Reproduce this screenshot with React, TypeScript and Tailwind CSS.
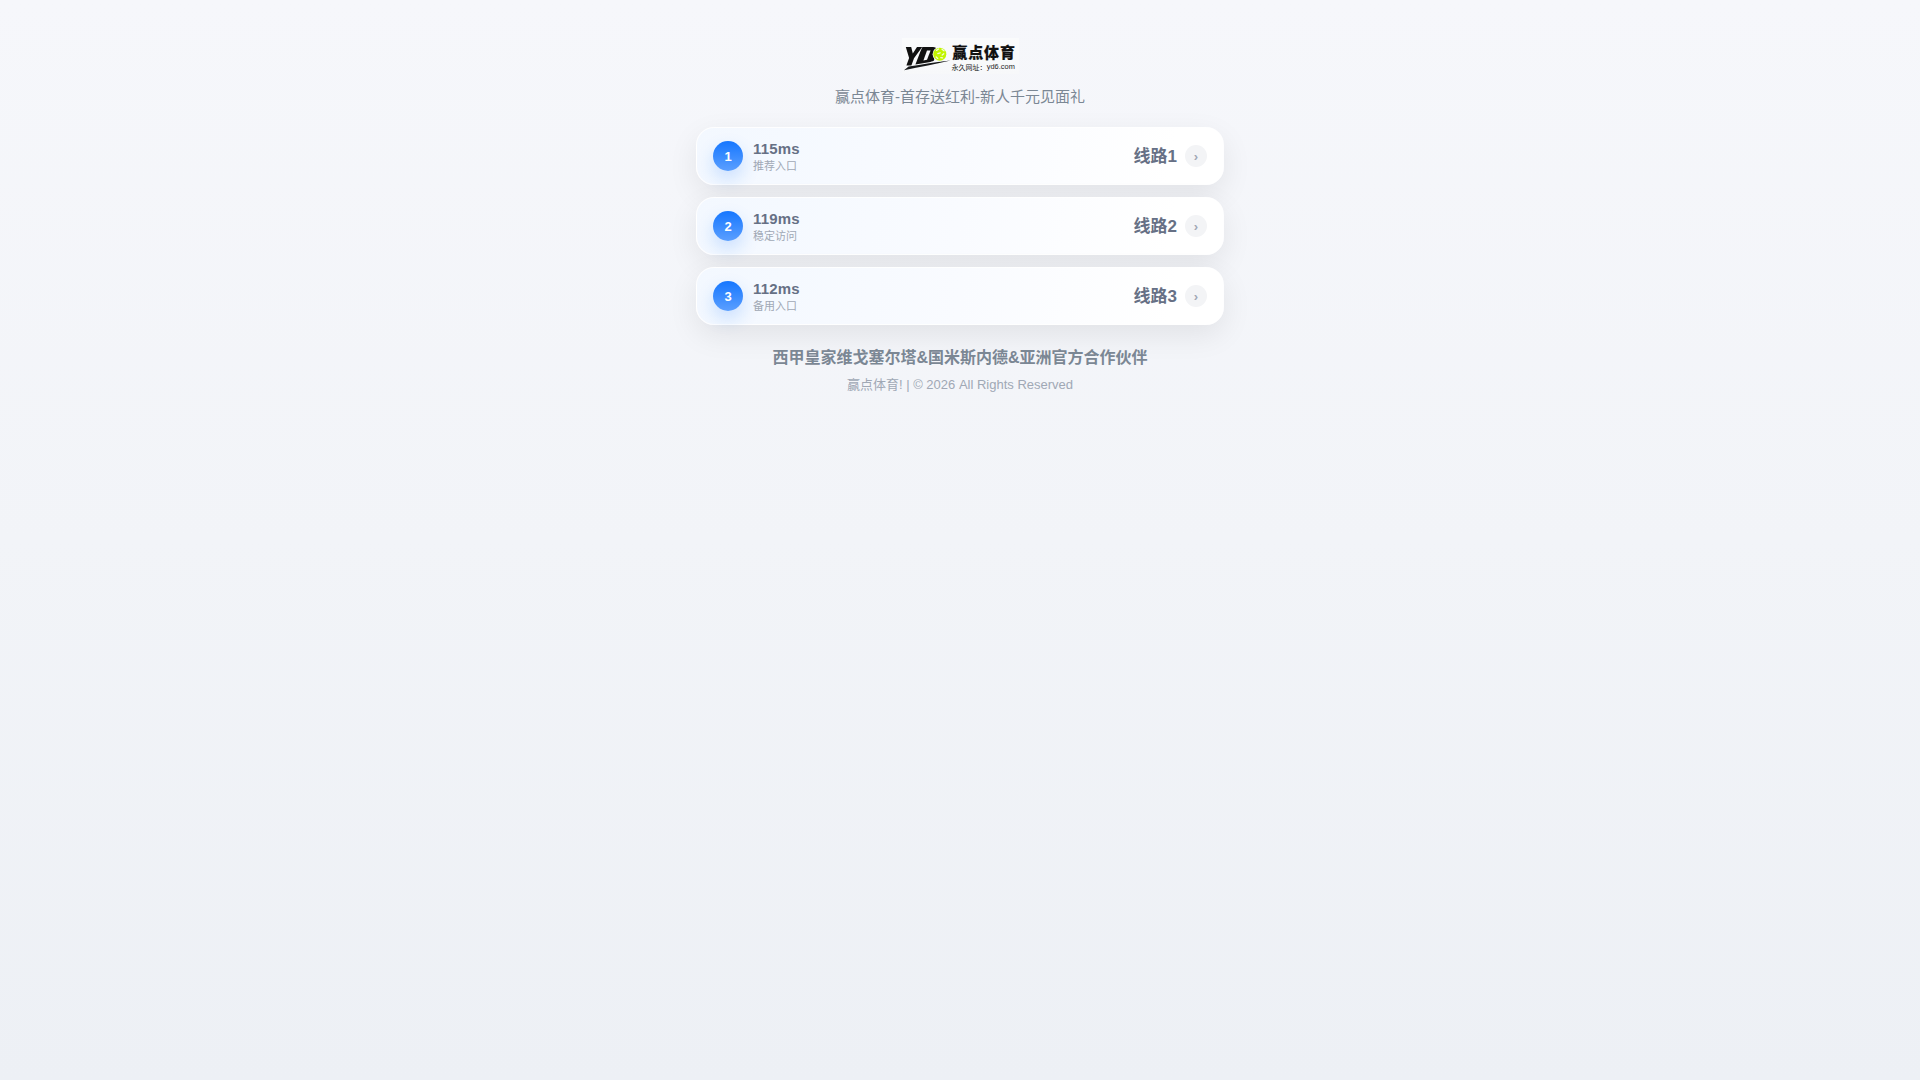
import React, { FC } from "react";

interface LineItem {
  id: number;
  ms: number;
  desc: string;
}

const lines: LineItem[] = [
  { id: 1, ms: 115, desc: "推荐入口" },
  { id: 2, ms: 119, desc: "稳定访问" },
  { id: 3, ms: 112, desc: "备用入口" },
];

const Logo: FC = () => {
  return (
    <svg width="117" height="36" viewBox="0 0 117 36" className="block">
      <defs>
        <linearGradient id="logoBg" x1="0" y1="0" x2="0" y2="1">
          <stop offset="0" stopColor="#fafbfc" />
          <stop offset="1" stopColor="#f7f8fa" />
        </linearGradient>
      </defs>
      <rect width="117" height="36" fill="url(#logoBg)" />
      <path
        d="M3.8 9h5.4l1.6 6.4L15 9h5.2L12 20.2 9.4 27.4H4.4l2.7-7.4z"
        fill="#111"
      />
      <path
        d="M20.4 9H31c2 0 3.2.8 3.4 2.2L32 22.6c-1.6 1-3.2 1.4-5 1.6l-13.6 2.2L18.6 13z"
        fill="#111"
      />
      <path d="M25 12.6h3.6L25 21.8l-3.6.6z" fill="#f8f9fb" />
      <path
        d="M2 32.2 6.6 28.6C20 26.4 34 23.8 48.5 22.4 34 25.6 18 29 2 32.2z"
        fill="#16181a"
      />
      <circle cx="37.8" cy="16.2" r="7.2" fill="#f8f9fb" />
      <circle cx="37.8" cy="16.2" r="6.5" fill="#c2f500" />
      <path
        d="M34.6 12.4l2-1.4M40 11.2l2 1.6M35.8 15.6l2.4-.8M40.2 17l1.6-1.2M34.2 19l1.6 1.4M38.8 19.6l1.8.2"
        stroke="#f2fbdc"
        strokeWidth="1.3"
        strokeLinecap="round"
      />
      <text
        x="50.2"
        y="20.1"
        fontSize="15"
        fontWeight="900"
        textLength="62.8"
        fill="#111"
        stroke="#111"
        strokeWidth="0.2"
      >
        赢点体育
      </text>
      <text
        x="49.6"
        y="31.6"
        fontSize="7"
        fill="#222"
        textLength="35"
        lengthAdjust="spacingAndGlyphs"
      >
        永久网址：
      </text>
      <text x="84.8" y="31.4" fontSize="7.4" fill="#222" textLength="28">
        yd6.com
      </text>
    </svg>
  );
};

const LineCard: FC<{ item: LineItem }> = ({ item }) => {
  return (
    <a
      href="#"
      className="flex h-[58px] items-center justify-between rounded-[18px] border border-white/90 bg-[linear-gradient(100deg,#f3f8ff_0%,#f9fbff_50%,#ffffff_90%)] px-4 shadow-[0_10px_30px_rgba(0,0,0,0.08)]"
    >
      <div className="flex items-center gap-2.5">
        <span className="flex size-[30px] items-center justify-center rounded-full bg-[linear-gradient(180deg,#1677ff,#5b9fff)] pt-px text-[13px] font-bold text-white shadow-[0_8px_18px_rgba(22,119,255,0.2)]">
          {item.id}
        </span>
        <div className="flex flex-col gap-[3px]">
          <span className="text-[15px] font-bold leading-[17px] tracking-[0.15px] text-[#667085]">
            {item.ms}ms
          </span>
          <span className="text-[11px] leading-[13px] text-[#a0a8b5]">
            {item.desc}
          </span>
        </div>
      </div>
      <div className="flex items-center gap-2">
        <span className="pt-0.5 text-[17px] font-bold leading-5 text-[#667085]">
          线路{item.id}
        </span>
        <span className="flex size-[22px] items-center justify-center rounded-full bg-[#f3f4f6] text-[13px] font-bold leading-none text-[#a0a8b5]">
          ›
        </span>
      </div>
    </a>
  );
};

const App: FC = () => {
  return (
    <div className="min-h-screen bg-[linear-gradient(180deg,#f6f7fb_0%,#f2f4f8_50%,#edf0f5_100%)] font-['Liberation_Sans','Noto_Sans_CJK_SC',sans-serif]">
      <main className="mx-auto flex w-[528px] flex-col items-center pt-[38px]">
        <Logo />
        <p className="mt-3 text-[15px] leading-[22px] text-[#7b8794]">
          赢点体育-首存送红利-新人千元见面礼
        </p>
        <div className="mt-[19px] flex w-full flex-col gap-3">
          {lines.map((item) => (
            <LineCard key={item.id} item={item} />
          ))}
        </div>
        <p className="mt-[21px] text-base font-bold leading-6 text-[#7b8794]">
          西甲皇家维戈塞尔塔&国米斯内德&亚洲官方合作伙伴
        </p>
        <p className="mt-[5px] text-[13px] leading-[19px] text-[#a0a8b5]">
          赢点体育! | © 2026 All Rights Reserved
        </p>
      </main>
    </div>
  );
};

export default App;
